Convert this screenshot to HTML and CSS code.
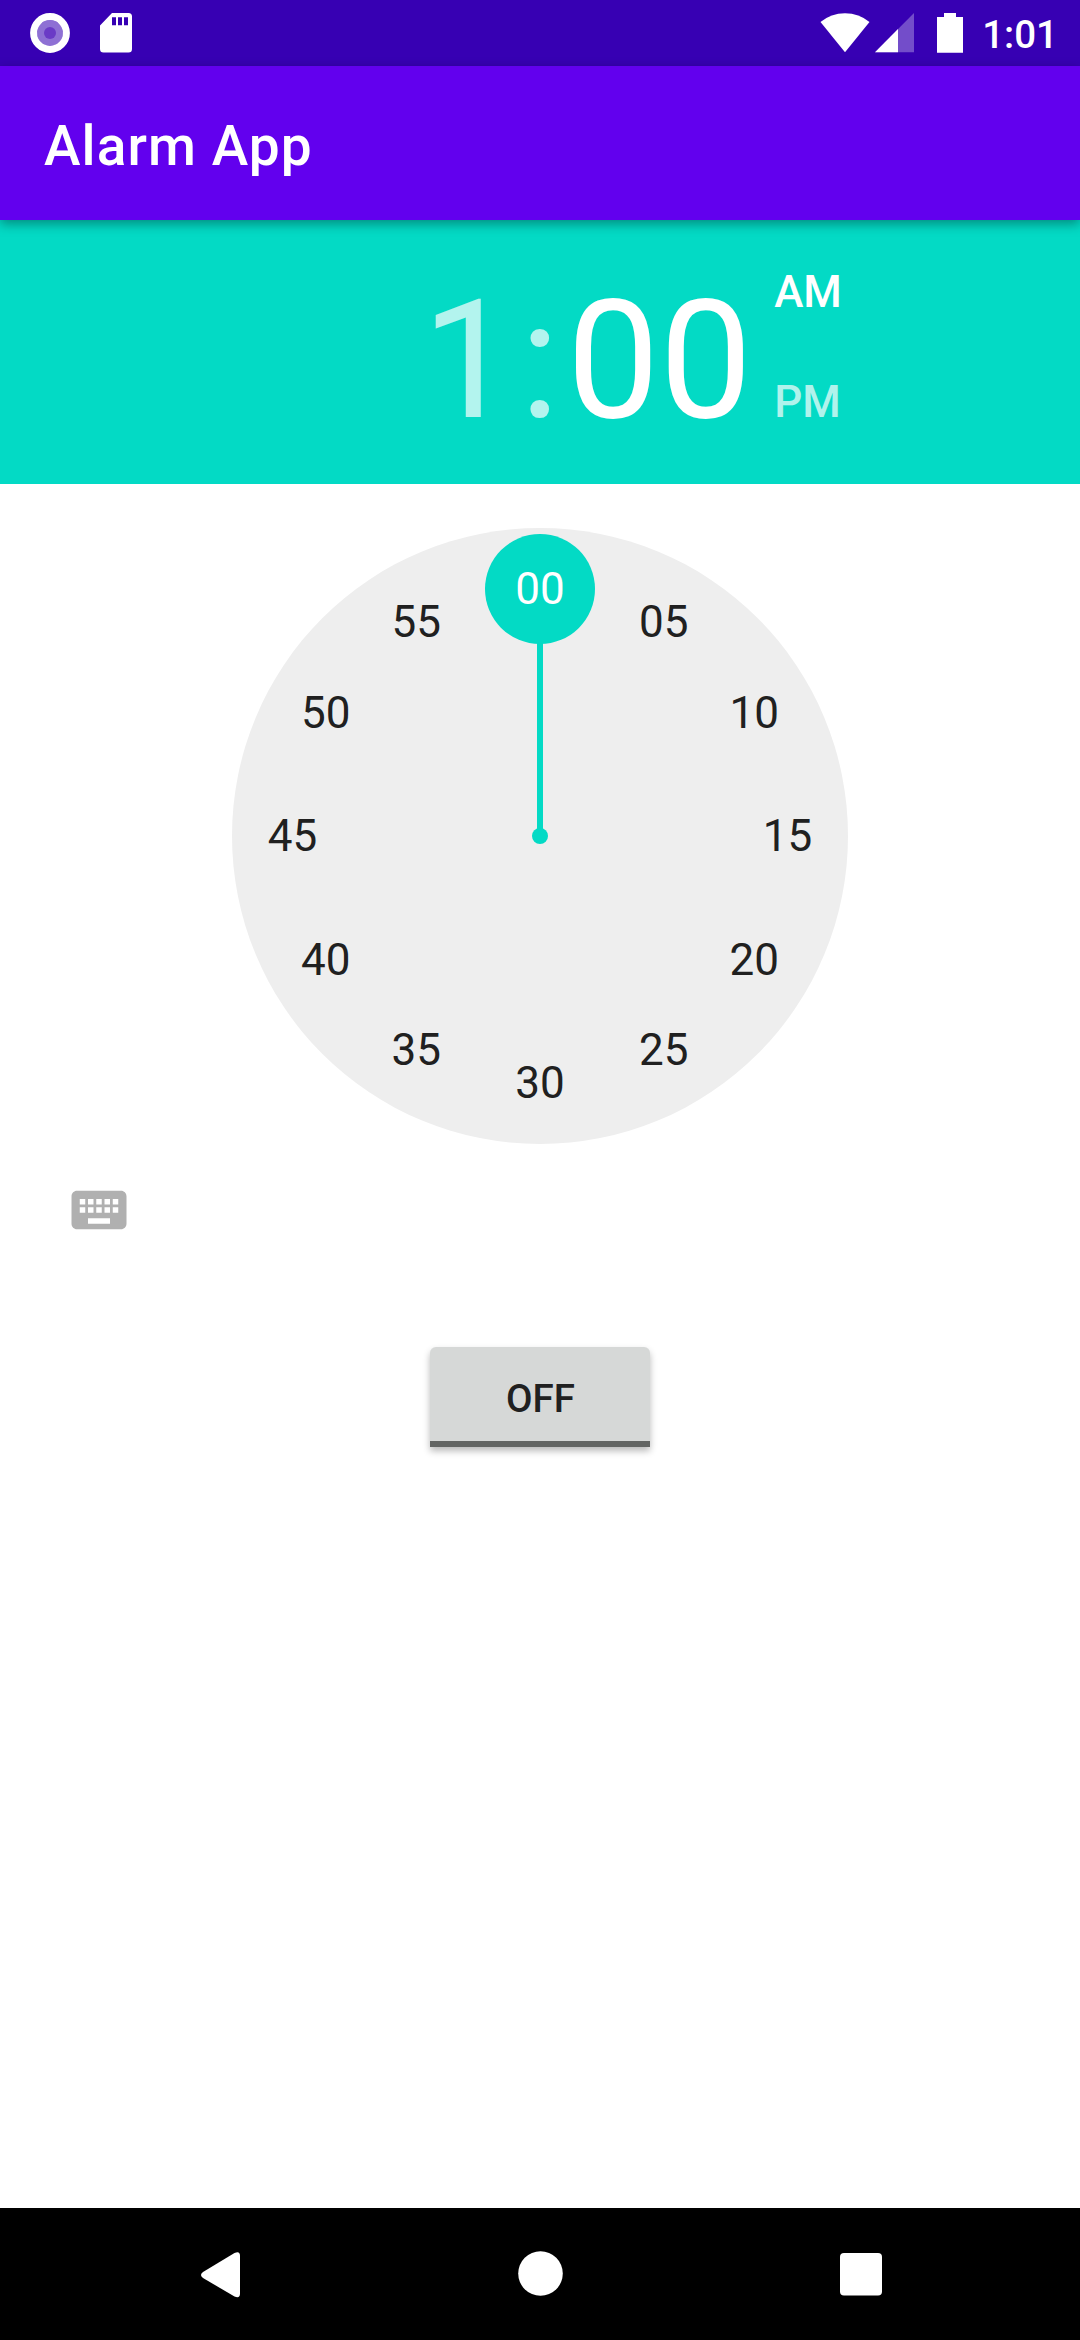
FILE: index.html
```html
<!DOCTYPE html>
<html lang="en">
<head>
<meta charset="utf-8">
<title>Alarm App</title>
<link rel="stylesheet" href="styles.css">
</head>
<body>
<div class="screen">
  <div class="status-bar">
    <div class="status-group">
      <svg class="icon-record" viewBox="0 0 40 40"><circle cx="20" cy="20" r="16.4" fill="none" stroke="#fff" stroke-width="7"/><circle cx="20" cy="20" r="13" fill="#fff" fill-opacity=".44"/><circle cx="20" cy="20" r="6" fill="#6a3bc6"/></svg>
      <svg class="icon-sd" viewBox="0 0 32 40"><path fill="#fff" fill-rule="evenodd" d="M12 0H28.500A3.500 3.500 0 0 1 32 3.500V36a3.500 3.500 0 0 1-3.500 3.500H3.500A3.500 3.500 0 0 1 0 36V12.500ZM12 4.200v8h4v-8ZM18 4.200v8h4v-8ZM24 4.200v8h4v-8Z"/></svg>
    </div>
    <div class="status-group status-right">
      <svg class="icon-wifi" viewBox="0 0 50 40"><path fill="#fff" d="M.5 9Q11 .2 25 .2T49.500 9L25 39.200Z"/></svg>
      <svg class="icon-signal" viewBox="0 0 39 40"><path fill="#fff" fill-opacity=".3" d="M39 0V39.200H0Z"/><path fill="#fff" d="M23 16V39.200H0Z"/></svg>
      <svg class="icon-battery" viewBox="0 0 26 40"><path fill="#fff" d="M7 0H19V4H26V39.700H0V4H7Z"/></svg>
      <span class="clock">1:01</span>
    </div>
  </div>
  <header class="app-bar"><h1 class="title">Alarm App</h1></header>
  <main class="content">
    <section class="time-header">
      <span class="time dim hours">1</span><span class="time dim colon">:</span><span class="time minutes">00</span>
      <div class="ampm"><span>AM</span><span class="dim">PM</span></div>
    </section>
    <svg class="dial" viewBox="-308 -308 616 616">
      <circle r="308" fill="#eee"/>
      <path d="M0 0V-247" stroke="#03dac5" stroke-width="6"/>
      <circle r="8" fill="#03dac5"/>
      <circle cy="-247" r="55" fill="#03dac5"/>
      <g class="numbers">
        <text class="selected" x="0" y="-232">00</text>
        <text x="123.700" y="-199">05</text>
        <text x="214.300" y="-108">10</text>
        <text x="247.500" y="15">15</text>
        <text x="214.300" y="139">20</text>
        <text x="123.700" y="229">25</text>
        <text x="0" y="262">30</text>
        <text x="-123.700" y="229">35</text>
        <text x="-214.300" y="139">40</text>
        <text x="-247.500" y="15">45</text>
        <text x="-214.300" y="-108">50</text>
        <text x="-123.700" y="-199">55</text>
      </g>
    </svg>
    <svg class="keyboard" viewBox="0 0 24 24"><path fill="#b0b0b0" d="M20 5H4c-1.100 0-1.990.900-1.990 2L2 17c0 1.100.900 2 2 2h16c1.100 0 2-.900 2-2V7c0-1.100-.900-2-2-2zm-9 3h2v2h-2V8zm0 3h2v2h-2v-2zM8 8h2v2H8V8zm0 3h2v2H8v-2zm-1 2H5v-2h2v2zm0-3H5V8h2v2zm9 7H8v-2h8v2zm0-4h-2v-2h2v2zm0-3h-2V8h2v2zm3 3h-2v-2h2v2zm0-3h-2V8h2v2z"/></svg>
    <button class="toggle">OFF</button>
  </main>
  <nav class="nav-bar">
    <svg class="nav-back" viewBox="0 0 40 46"><path fill="#fff" d="M33.500 1.100Q39 -1.500 39 4V41.500Q39 47 33.500 44.500L2 26Q-2 23 2 20Z"/></svg>
    <svg class="nav-home" viewBox="0 0 45 45"><circle cx="22.500" cy="22.500" r="22.300" fill="#fff"/></svg>
    <svg class="nav-recent" viewBox="0 0 42 43"><rect width="42" height="42.500" rx="4" fill="#fff"/></svg>
  </nav>
</div>
</body>
</html>
```
FILE: styles.css
```css
* { box-sizing: border-box; }
body { margin: 0; background: #fff; font-family: Roboto, sans-serif; }
svg { display: block; flex: none; }
.screen { width: 1080px; height: 2340px; display: flex; flex-direction: column; overflow: hidden; }

.status-bar { height: 66px; flex: none; background: #3700b3; display: flex; justify-content: space-between; padding: 0 22px 0 30px; color: #fff; }
.status-group { display: flex; align-items: flex-start; padding-top: 13px; }
.icon-record { width: 40px; height: 40px; }
.icon-sd { width: 32px; height: 40px; margin-left: 30px; }
.icon-wifi { width: 50px; height: 40px; }
.icon-signal { width: 39px; height: 40px; margin-left: 5px; }
.icon-battery { width: 26px; height: 40px; margin-left: 23px; }
.clock { font-size: 38.5px; font-weight: 500; line-height: 44px; margin-left: 19px; }

.app-bar { height: 154px; flex: none; background: #6200ee; padding: 6px 44px 0; display: flex; align-items: center; box-shadow: 0 4px 11px rgba(0, 0, 0, .36); z-index: 1; }
.title { margin: 0; font-size: 55px; font-weight: 500; line-height: 64px; letter-spacing: 1.1px; color: #fff; }

.content { flex: 1; display: flex; flex-direction: column; }
.time-header { height: 264px; background: #03dac5; color: #fff; display: flex; align-items: flex-start; padding: 44px 0 0 422px; }
.time { font-size: 165px; line-height: 193px; }
.dim { color: rgba(255, 255, 255, .7); }
.colon { margin-left: 5px; }
.minutes { margin-left: 7px; }
.ampm { display: flex; flex-direction: column; gap: 58px; margin: 2px 0 0 22px; font-size: 44px; font-weight: 500; line-height: 52px; }

.dial { width: 616px; height: 616px; margin: 44px auto 0; }
.numbers { font-size: 44px; text-anchor: middle; fill: #202020; }
.numbers .selected { fill: #fff; }
.keyboard { width: 66px; height: 66px; margin: 33px 0 0 66px; }
.toggle { width: 220px; height: 100px; margin: 104px auto 0; padding: 10px 0 0 1px; border: 0; border-bottom: 6px solid #636563; border-radius: 6px 6px 0 0; background: #d6d8d7; box-shadow: 0 4px 7px rgba(0, 0, 0, .28); font: 500 38.5px/44px Roboto, sans-serif; color: #202020; }

.nav-bar { height: 132px; flex: none; background: #000; display: flex; padding: 43px 198px 0 201px; justify-content: space-between; align-items: flex-start; }
.nav-back { width: 40px; height: 46px; margin-top: 1px; }
.nav-home { width: 45px; height: 45px; }
.nav-recent { width: 42px; height: 43px; margin-top: 2px; }
```
